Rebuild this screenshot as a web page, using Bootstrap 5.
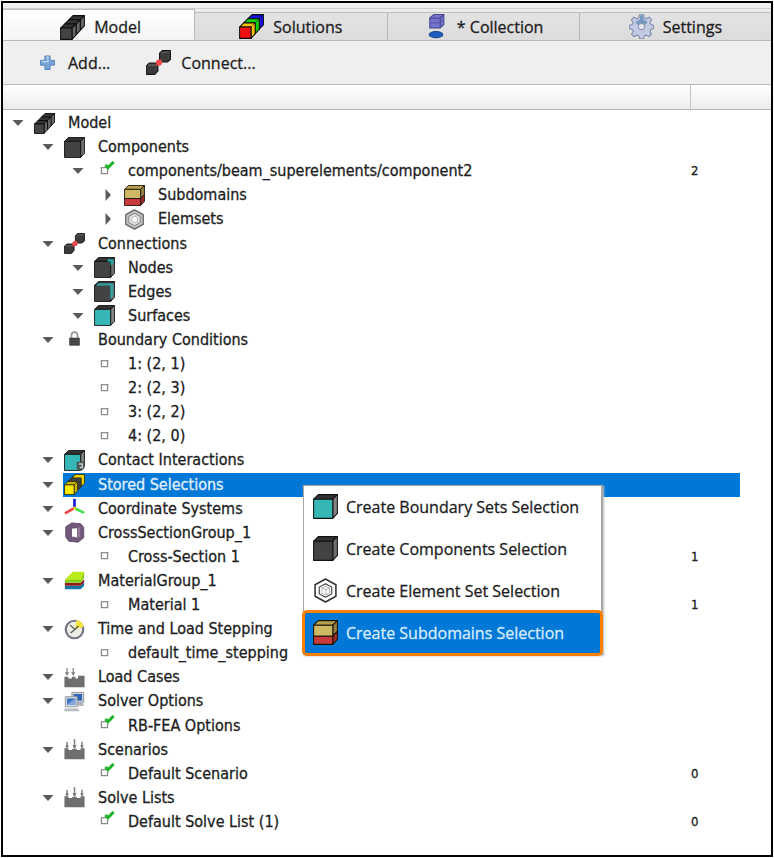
<!DOCTYPE html>
<html lang="en">
<head>
<meta charset="utf-8">
<meta name="viewport" content="width=device-width, initial-scale=1">
<title>Model tree</title>
<link href="https://cdn.jsdelivr.net/npm/bootstrap@5.3.0/dist/css/bootstrap.min.css" rel="stylesheet">
<style>
  body { font-family: "DejaVu Sans Condensed", "DejaVu Sans", sans-serif; font-size: 16px; line-height: 20px; color: #1d1d22; background: #fff; -webkit-text-stroke: .3px currentColor; }
  .ui-font { font-family: "Open Sans", "Noto Sans", sans-serif; }
  .frame { border: 2px solid #000; }
  .page { min-height: 100vh; padding: 1px; }
  .strip { height: 6px; background: #f0f0f0; border-bottom: 1px solid #d0d0d0; }
  .tabs { background: #ececec; border-bottom: 1px solid #b9b9b9; }
  .tab-btn { height: 28px; margin-top: 3px; padding: 0 6px; gap: 9px; border: 0; border-top: 1px solid #bcbcbc; border-right: 1px solid #b9b9b9; background: linear-gradient(#e3e3e3, #dcdcdc); color: inherit; }
  .tab-btn.current { height: 31px; margin-top: 0; padding: 4px 4px 0 8px; background: linear-gradient(#fff, #f4f4f4); }
  .tab-btn:last-child { border-right: 0; }
  .tools { height: 44px; background: #efefef; border-bottom: 1px solid #b9b9b9; padding-left: 34px; gap: 36px; }
  .tools button { gap: 10px; color: inherit; }
  .heads { height: 25px; background: linear-gradient(#fff, #ececec); border-bottom: 1px solid #b5b5b5; }
  .heads .second { width: 81px; border-left: 1px solid #c4c4c4; }
  .tree { display: grid; grid-auto-rows: minmax(24px, 1fr); padding: 1px 31px 21px 5px; }
  .l1 { padding-left: 30px; } .l2 { padding-left: 60px; } .l3 { padding-left: 90px; }
  .twist { width: 20px; margin-right: 5px; }
  .twist svg { width: 12px; height: 12px; }
  .line { padding-left: 1px; gap: 13px; }
  .num { width: 49px; font-size: 13px; }
  .picked { background: #0078d7; color: #e0efff; }
  .i20 { width: 21px; height: 21px; flex: none; }
  .i24 { width: 25px; height: 25px; flex: none; }
  .popup { left: 295px; top: 12px; width: 300px; background: #fff; border: 1px solid #a8a8a8; border-right-width: 2px; box-shadow: 1px 1px 2px #bbb; z-index: 5; }
  .popup button { height: 42px; gap: 8px; padding: 0 9px; color: #1d1d22; }
  .popup .hot { background: #0078d7; color: #d9ecff; outline: 3px solid #ff8000; outline-offset: -1px; border-radius: 3px; }
</style>
</head>
<body>
<svg width="0" height="0" class="position-absolute" aria-hidden="true">
  <defs>
    <symbol id="down" viewBox="0 0 12 12"><path d="M.5 3h11L6 9z" fill="#5a5a5a"/></symbol>
    <symbol id="right" viewBox="0 0 12 12"><path d="M3.500 0v12L9 6z" fill="#5a5a5a"/></symbol>
    <symbol id="cube" viewBox="0 0 24 24"><g stroke="#111" stroke-linejoin="round"><path d="M.6 5 5 .6h18.4L19 5z" fill="#333"/><path d="M19 5 23.4.6v18L19 23.4z" fill="#707070"/><path d="M.6 5H19v18.4H.6z" fill="#434343"/></g></symbol>
    <symbol id="surf" viewBox="0 0 24 24"><g stroke="#111" stroke-linejoin="round"><path d="M.6 5 5 .6h18.4L19 5z" fill="#333"/><path d="M19 5 23.4.6v18L19 23.4z" fill="#858585"/><path d="M.6 5H19v18.4H.6z" fill="#37b6b6"/></g></symbol>
    <symbol id="node" viewBox="0 0 24 24"><use href="#cube"/><path d="M15.500 2.500H22V7l-3 3V5h-3.500z" fill="#23a9a4"/></symbol>
    <symbol id="edge" viewBox="0 0 24 24"><use href="#cube"/><path d="M2 5.500 5 2.500h17V17l-3.500 4V5.500z" fill="#379e9e"/></symbol>
    <symbol id="contact" viewBox="0 0 24 24"><use href="#surf"/><path d="M14.500 13.500h9v7l-3 3h-4l-2-2z" fill="#4b5558"/><path d="M17 16h4v4h-3" fill="none" stroke="#c9cfd0" stroke-width="1.500"/></symbol>
    <symbol id="sub" viewBox="0 0 24 24"><g stroke="#1b1208" stroke-linejoin="round"><path d="M.6 5 5 .6h18.4L19 5z" fill="#b7a050"/><path d="M19 5 23.4.6V11L19 15.500z" fill="#968240"/><path d="M19 15.500 23.4 11v7.600L19 23.400z" fill="#a12b2b"/><path d="M.6 5H19v10.500H.6z" fill="#cdb964"/><path d="M.6 15.500H19v7.900H.6z" fill="#c93b3c"/></g></symbol>
    <symbol id="hex" viewBox="0 0 24 24"><g fill="#fff" stroke="#333" stroke-linejoin="round"><path d="m12 1 10 5.500v11L12 23 2 17.500v-11z" stroke-width="1.500"/><path d="m12 5.500 6 3.300v6.400l-6 3.300-6-3.300V8.800z"/><path d="M8.500 9.500 12 8l4 1.500-3.500 1.600zM8.500 9.500v5l4 1.700v-5M12.500 16.200l3.500-1.700v-5" stroke="#aaa" stroke-width=".8"/></g></symbol>
    <symbol id="hexg" viewBox="0 0 24 24"><g fill="#c2c2c2" stroke="#555" stroke-linejoin="round"><path d="m12 1 10 5.500v11L12 23 2 17.500v-11z" stroke="#666" stroke-width="1.500"/><path d="m12 5 6.500 3.500v7L12 19l-6.500-3.500v-7z" fill="#e8e8e8" stroke="#777"/><path d="M9 9.500 12 8l3.500 1.500v5L12 16l-3-1.500z" fill="#f7f7f7" stroke="#aaa"/></g></symbol>
    <symbol id="chain" viewBox="0 0 24 24"><g stroke="#0c0c0c" stroke-linejoin="round"><path d="M.6 12.500 12.500.6h10.900L11.500 12.500z" fill="#343434"/><path d="M11.500 12.500 23.400.6v9.900L11.500 23.400z" fill="#686868"/><path d="M.6 12.500h10.900v10.900H.6z" fill="#444"/><path d="M4.500 8.500h11v10.500M8.500 4.500h11v10" fill="none" stroke-width="1.200"/></g></symbol>
    <symbol id="rainbow" viewBox="0 0 24 24"><g stroke="#0c0c0c" stroke-linejoin="round"><path d="M8.500 4.500 12.500.6h10.900v9.900l-3.900 4V4.500z" fill="#1111e0"/><path d="m4.500 8.500 4-4h11v10l-4 4.500V8.500z" fill="#0bd40b"/><path d="m.6 12.500 3.900-4h11V19l-4 4.400V12.500z" fill="#ffc400"/><path d="M.6 12.500h10.900v10.900H.6z" fill="#ee1111"/><path d="m11.500 12.500 4-4M15.500 8.500l4-4M19.500 4.500l3.900-3.900" fill="none" stroke-width=".6"/></g></symbol>
    <symbol id="stored" viewBox="0 0 24 24"><g stroke="#2a2600" stroke-width=".9" stroke-linejoin="round"><path d="m8.500 5 4-4.400h10.900v9.900l-3.900 4V5z" fill="#e8d800"/><path d="m4.500 8.500 4-4h11v10l-4 4.500V8.500z" fill="#444"/><path d="m.6 12.500 3.900-4h11V19l-4 4.400V12.500z" fill="#c8b800"/><path d="M.6 12.500h10.900v10.900H.6z" fill="#ffec00"/><path d="m11.500 12.500 4-4M8.500 5l4-4.400" fill="none"/></g></symbol>
    <symbol id="link" viewBox="0 0 24 24"><g fill="#3b3b3b" stroke="#171717" stroke-linejoin="round"><path d="M13 3 15.500.6h8V9l-3 2.500H13z"/><path d="M.6 15 3 12.500h8.500V20l-3 3.400H.6z"/></g><path d="m14.500 2.500 8-.5M2 14.500h7" stroke="#666"/><path d="M9.500 15 15 9.500" stroke="#a33" stroke-width="2"/><circle cx="12.500" cy="12" r="3" fill="#f04a4a"/></symbol>
    <symbol id="plus" viewBox="0 0 24 24"><path d="M9 4.500h6v5h5v5.500h-5v5H9v-5H4V9.500h5z" fill="#79a5d6" stroke="#5480b8"/><path d="M10.500 6h2v5h-7" stroke="#bfdaf4" stroke-width="1.500" fill="none"/></symbol>
    <symbol id="collect" viewBox="0 0 24 24"><path d="m6.500 3.500 4-3H20V10l-3.500 3.500h-10z" fill="#7474cc" stroke="#454590"/><path d="M6.500 4H16.500l3.500-3.500M16.500 4v9" stroke="#454590" fill="none"/><path d="M6.500 8.500h10l3.500-3" stroke="#5b5bab" fill="none"/><ellipse cx="12.500" cy="19.800" rx="6.500" ry="3" fill="#1d5fc0" stroke="#163f80"/></symbol>
    <symbol id="gear" viewBox="0 0 24 24"><path d="m10 .8h4l.6 3 2 .8L19.400 3l2.300 2.500-1.600 2.600.9 2 2.600.6v3.400l-2.600.8-.9 2 1.500 2.600-2.400 2.300-2.600-1.500-2 .8-.6 2.700h-3.800l-.7-2.800-2-.8-2.700 1.600-2.400-2.400 1.600-2.600-.8-2-3-.6v-3.500l3-.6.8-2-1.700-2.600L4.800 3l2.500 1.600 2-.8z" fill="#c3c9e2" stroke="#7e8aaa" stroke-linejoin="round"/><path d="M6 8.500Q9 5 12 5t6 3l-3 2.500q-3-2.500-6 0zM10.500 1.500h3V6h-3z" fill="#7399c0"/><circle cx="12" cy="12" r="3" fill="#e6e6ea" stroke="#8b94b4"/></symbol>
    <symbol id="sq" viewBox="0 0 24 24"><path d="M8.500 7.500h7v7h-7z" fill="#fff" stroke="#8c8c8c" stroke-width="1.500"/></symbol>
    <symbol id="ok" viewBox="0 0 24 24"><path d="M8.500 7.500h7v7h-7z" fill="#fff" stroke="#8c8c8c" stroke-width="1.500"/><path d="m13 4.500 3 3 6.500-6.500" fill="none" stroke="#1fb52b" stroke-width="3.400"/></symbol>
    <symbol id="lock" viewBox="0 0 24 24"><path d="M8.500 11V7.500q0-4 3.500-4t3.500 4V11" fill="none" stroke="#999" stroke-width="2"/><path d="M6 10h12v9H6z" fill="#3e3e3e"/><path d="M6 13h12M6 16h12" stroke="#5a5a5a"/></symbol>
    <symbol id="axes" viewBox="0 0 24 24"><path d="M12 11V1" stroke="#1616e0" stroke-width="3"/><path d="m11 12-10 5.500" stroke="#f04848" stroke-width="3"/><path d="m13 12 10 5" stroke="#42e04a" stroke-width="3"/><circle cx="12" cy="11.500" r="1.800" fill="#f0cc22"/></symbol>
    <symbol id="ring" viewBox="0 0 24 24"><path d="M2 5.500 9 1l10 1 3.500 4v12L16 23 5.500 22 2 17zM8.500 7v10l7 1.500V6.500z" fill="#73587d" fill-rule="evenodd" stroke="#5c4666"/><path d="m15.500 6.500 3-1v11l-3 2z" fill="#927a9b"/></symbol>
    <symbol id="mat" viewBox="0 0 24 24"><path d="M1 18h18l4-4v4l-4 4H1z" fill="#1476a8"/><path d="M1 14.500h18l4-4V14l-4 4H1z" fill="#8f1c18"/><path d="M1 12 10 3h13v6l-4 5.500H1z" fill="#86cc18"/><path d="m1 11 9-9h13l-3.500 9z" fill="#b9ea1c"/></symbol>
    <symbol id="clock" viewBox="0 0 24 24"><circle cx="12" cy="12" r="10" fill="#eeeee2" stroke="#77778a" stroke-width="2.500"/><path d="M13 11 14 1.500q7 0 8.500 7.500z" fill="#f4e53c"/><path d="m7 7 5.500 5-5 4M12.500 12l4-4" fill="none" stroke="#555" stroke-width="1.500"/></symbol>
    <symbol id="load" viewBox="0 0 24 24"><path d="M.5 11h4.500v2h4v-2h4v2h3v-3h7.500v13H.5z" fill="#6e6e70"/><path d="M3.500 1v8M10.500 1v8" stroke="#898989" stroke-width="1.500"/><path d="m8 6 2.500 4L13 6zM1 6l2.500 4L6 6z" fill="#808082"/></symbol>
    <symbol id="scen" viewBox="0 0 24 24"><path d="M.5 10.500h4.500v2h4.500v-1.500h5v1.500H19v-2h4.500V23H.5z" fill="#6e6e70"/><path d="M3.500 3v7M12 0v10M20.500 3v7" stroke="#838385" stroke-width="1.700"/><path d="m9.500 7 2.500 4 2.500-4zM1.500 7l2 4 2-4zM18.500 7l2 4 2-4z" fill="#777779"/></symbol>
    <symbol id="pcs" viewBox="0 0 24 24"><path d="M9 1.500h13.500V13H9z" fill="#c9ccd2" stroke="#8c929d"/><path d="M11 3.500h9.500v7.500H11z" fill="#2f62b8"/><path d="m14 15 2-2h5l2 4h-9z" fill="#b4b7bd"/><path d="M1.500 6.500H15V18H1.500z" fill="#d5d8dd" stroke="#8c929d"/><path d="M3.500 8.500H13V16H3.500z" fill="#3c72c6"/><path d="m4 15 8-6h1v7H4z" fill="#85a9df"/><path d="M1 20h15l2 3H0z" fill="#b9bcc3"/></symbol>
  </defs>
</svg>

<div class="page d-flex">
<main class="frame d-flex flex-column flex-grow-1">
  <div class="strip"></div>
  <div class="tabs row g-0 align-items-end ui-font" role="tablist">
    <button type="button" role="tab" aria-selected="true" class="tab-btn current col d-flex align-items-center justify-content-center"><svg class="i24"><use href="#chain"/></svg>Model</button>
    <button type="button" role="tab" class="tab-btn col d-flex align-items-center justify-content-center"><svg class="i24"><use href="#rainbow"/></svg>Solutions</button>
    <button type="button" role="tab" class="tab-btn col d-flex align-items-center justify-content-center"><svg class="i24"><use href="#collect"/></svg>* Collection</button>
    <button type="button" role="tab" class="tab-btn col d-flex align-items-center justify-content-center"><svg class="i24"><use href="#gear"/></svg>Settings</button>
  </div>
  <div class="tools d-flex align-items-center ui-font">
    <button type="button" class="border-0 bg-transparent p-0 d-flex align-items-center"><svg class="i20"><use href="#plus"/></svg>Add...</button>
    <button type="button" class="border-0 bg-transparent p-0 d-flex align-items-center"><svg class="i24"><use href="#link"/></svg>Connect...</button>
  </div>
  <div class="heads d-flex"><div class="flex-grow-1"></div><div class="second"></div></div>

  <ul class="tree list-unstyled mb-0 flex-grow-1" id="tree"></ul>
</main>
</div>

<template id="menu">
  <div class="popup position-absolute d-flex flex-column ui-font" role="menu">
    <button type="button" role="menuitem" class="border-0 bg-transparent d-flex align-items-center text-nowrap"><svg class="i24"><use href="#surf"/></svg>Create Boundary Sets Selection</button>
    <button type="button" role="menuitem" class="border-0 bg-transparent d-flex align-items-center text-nowrap"><svg class="i24"><use href="#cube"/></svg>Create Components Selection</button>
    <button type="button" role="menuitem" class="border-0 bg-transparent d-flex align-items-center text-nowrap"><svg class="i24"><use href="#hex"/></svg>Create Element Set Selection</button>
    <button type="button" role="menuitem" class="hot border-0 d-flex align-items-center text-nowrap"><svg class="i24"><use href="#sub"/></svg>Create Subdomains Selection</button>
  </div>
</template>

<script src="https://cdn.jsdelivr.net/npm/bootstrap@5.3.0/dist/js/bootstrap.bundle.min.js"></script>
<script>
  // level, arrow (down / right / none), icon, label, count
  const rows = [
    [0, "down", "chain", "Model"],
    [1, "down", "cube", "Components"],
    [2, "down", "ok", "components/beam_superelements/component2", "2"],
    [3, "right", "sub", "Subdomains"],
    [3, "right", "hexg", "Elemsets"],
    [1, "down", "link", "Connections"],
    [2, "down", "node", "Nodes"],
    [2, "down", "edge", "Edges"],
    [2, "down", "surf", "Surfaces"],
    [1, "down", "lock", "Boundary Conditions"],
    [2, "", "sq", "1: (2, 1)"],
    [2, "", "sq", "2: (2, 3)"],
    [2, "", "sq", "3: (2, 2)"],
    [2, "", "sq", "4: (2, 0)"],
    [1, "down", "contact", "Contact Interactions"],
    [1, "down", "stored", "Stored Selections"],
    [1, "down", "axes", "Coordinate Systems"],
    [1, "down", "ring", "CrossSectionGroup_1"],
    [2, "", "sq", "Cross-Section 1", "1"],
    [1, "down", "mat", "MaterialGroup_1"],
    [2, "", "sq", "Material 1", "1"],
    [1, "down", "clock", "Time and Load Stepping"],
    [2, "", "sq", "default_time_stepping"],
    [1, "down", "load", "Load Cases"],
    [1, "down", "pcs", "Solver Options"],
    [2, "", "ok", "RB-FEA Options"],
    [1, "down", "scen", "Scenarios"],
    [2, "", "ok", "Default Scenario", "0"],
    [1, "down", "scen", "Solve Lists"],
    [2, "", "ok", "Default Solve List (1)", "0"]
  ];
  document.getElementById("tree").innerHTML = rows.map(([level, arrow, icon, label, count = ""]) => {
    const picked = label === "Stored Selections";
    const twist = arrow
      ? `<button type="button" class="twist border-0 bg-transparent p-0 d-flex justify-content-center align-items-center" aria-label="Toggle ${label}"><svg><use href="#${arrow}"/></svg></button>`
      : `<span class="twist"></span>`;
    return `<li class="d-flex position-relative l${level}">${twist}
      <div class="line flex-grow-1 d-flex align-items-center ${picked ? "picked" : ""}"><svg class="i20"><use href="#${icon}"/></svg><span class="flex-grow-1 text-nowrap">${label}</span><span class="num">${count}</span></div>
      ${picked ? document.getElementById("menu").innerHTML : ""}</li>`;
  }).join("");
</script>
</body>
</html>
